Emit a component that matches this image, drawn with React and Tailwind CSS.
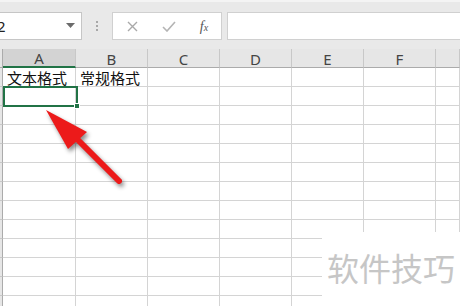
import React from 'react';

const cols = ['A', 'B', 'C', 'D', 'E', 'F', ''];
const rows = Array.from({ length: 13 }, (_, i) => i);

function Cell({ children, className = '' }) {
  return (
    <div className={`h-[19px] border-r border-b border-[#d4d4d4] text-[15px] leading-[20px] pl-[4px] whitespace-nowrap text-[#111] ${className}`}>
      {children}
    </div>
  );
}

export default function App() {
  return (
    <div className="relative w-[460px] h-[306px] overflow-hidden bg-white" style={{ fontFamily: '"Noto Sans", "Noto Sans CJK SC", sans-serif' }}>
      {/* formula bar */}
      <div className="h-[49px] bg-[#e9e9e9] border-t-[2px] border-[#f4f4f4] flex items-start pt-[10px]">
        <div className="w-[82px] h-[28px] bg-white border border-[#c6c6c6] border-l-0 flex items-center justify-between pr-[6px]">
          <span className="text-[15px] text-[#222] -ml-[3px]">2</span>
          <svg width="9" height="6" viewBox="0 0 9 6"><path d="M0 0 L9 0 L4.5 5 Z" fill="#6b6b6b" /></svg>
        </div>
        <div className="w-[30px] h-[28px] flex flex-col items-center justify-center gap-[2px]">
          <span className="w-[2px] h-[2px] bg-[#a8a8a8]" />
          <span className="w-[2px] h-[2px] bg-[#a8a8a8]" />
          <span className="w-[2px] h-[2px] bg-[#a8a8a8]" />
        </div>
        <div className="w-[110px] h-[28px] bg-white border border-[#d0d0d0] flex items-center">
          <div className="w-[38px] flex justify-center">
            <svg width="11" height="11" viewBox="0 0 11 11"><path d="M1 1 L10 10 M10 1 L1 10" stroke="#a9a9a9" strokeWidth="1.4" /></svg>
          </div>
          <div className="w-[36px] flex justify-center">
            <svg width="14" height="11" viewBox="0 0 14 11"><path d="M1 6 L5 10 L13 1" stroke="#b4b4b4" strokeWidth="1.6" fill="none" /></svg>
          </div>
          <div className="w-[34px] flex justify-center">
            <span className="text-[14px] italic text-[#555]" style={{ fontFamily: '"Liberation Serif", serif' }}>f<span className="text-[10px]">x</span></span>
          </div>
        </div>
        <div className="ml-[5px] flex-1 h-[28px] bg-white border border-[#d0d0d0] border-r-0" />
      </div>

      {/* grid */}
      <div className="grid grid-cols-[3px_73px_72px_72px_72px_72px_72px_1fr]">
        <div className="h-[19px] bg-[#e6e6e6] border-r border-b border-[#ababab]" />
        {cols.map((c, i) => (
          <div
            key={i}
            className={`h-[19px] border-r border-[#c8c8c8] flex items-center justify-center pt-[2px] text-[15px] text-[#444] ${i === 0 ? 'bg-[#d3d3d3] border-b-[2px] border-b-[#217346]' : 'bg-[#e6e6e6] border-b border-b-[#ababab]'}`}
          >
            {c}
          </div>
        ))}
        {rows.map((r) => (
          <React.Fragment key={r}>
            <div className="h-[19px] bg-[#e6e6e6] border-r border-[#ababab] border-b border-b-[#c8c8c8]" />
            <Cell>{r === 0 ? '文本格式' : ''}</Cell>
            <Cell className="pl-[3px]">{r === 0 ? '常规格式' : ''}</Cell>
            <Cell />
            <Cell />
            <Cell />
            <Cell />
            <Cell />
          </React.Fragment>
        ))}
      </div>

      {/* selected cell A2 */}
      <div className="absolute left-[3px] top-[86px] w-[75px] h-[21px] border-[2px] border-[#217346]" />
      <div className="absolute left-[74px] top-[103px] w-[6px] h-[6px] bg-[#217346] border border-white" />

      {/* red arrow */}
      <svg className="absolute left-0 top-0" width="460" height="306" viewBox="0 0 460 306" style={{ filter: 'drop-shadow(2px 3px 2px rgba(0,0,0,0.45))' }}>
        <line x1="74" y1="136" x2="119" y2="181" stroke="#ec1a1a" strokeWidth="6" strokeLinecap="round" />
        <polygon points="46,110 87,132 68,149" fill="#ec1a1a" />
      </svg>

      {/* watermark */}
      <div className="absolute left-[322px] top-[232px] right-0 bottom-0 bg-white">
        <div className="absolute left-[5px] top-[19px] text-[32px] leading-none text-[#c6c6c6] whitespace-nowrap" style={{ fontFamily: '"Noto Sans CJK SC", sans-serif' }}>
          软件技巧
        </div>
      </div>
    </div>
  );
}
